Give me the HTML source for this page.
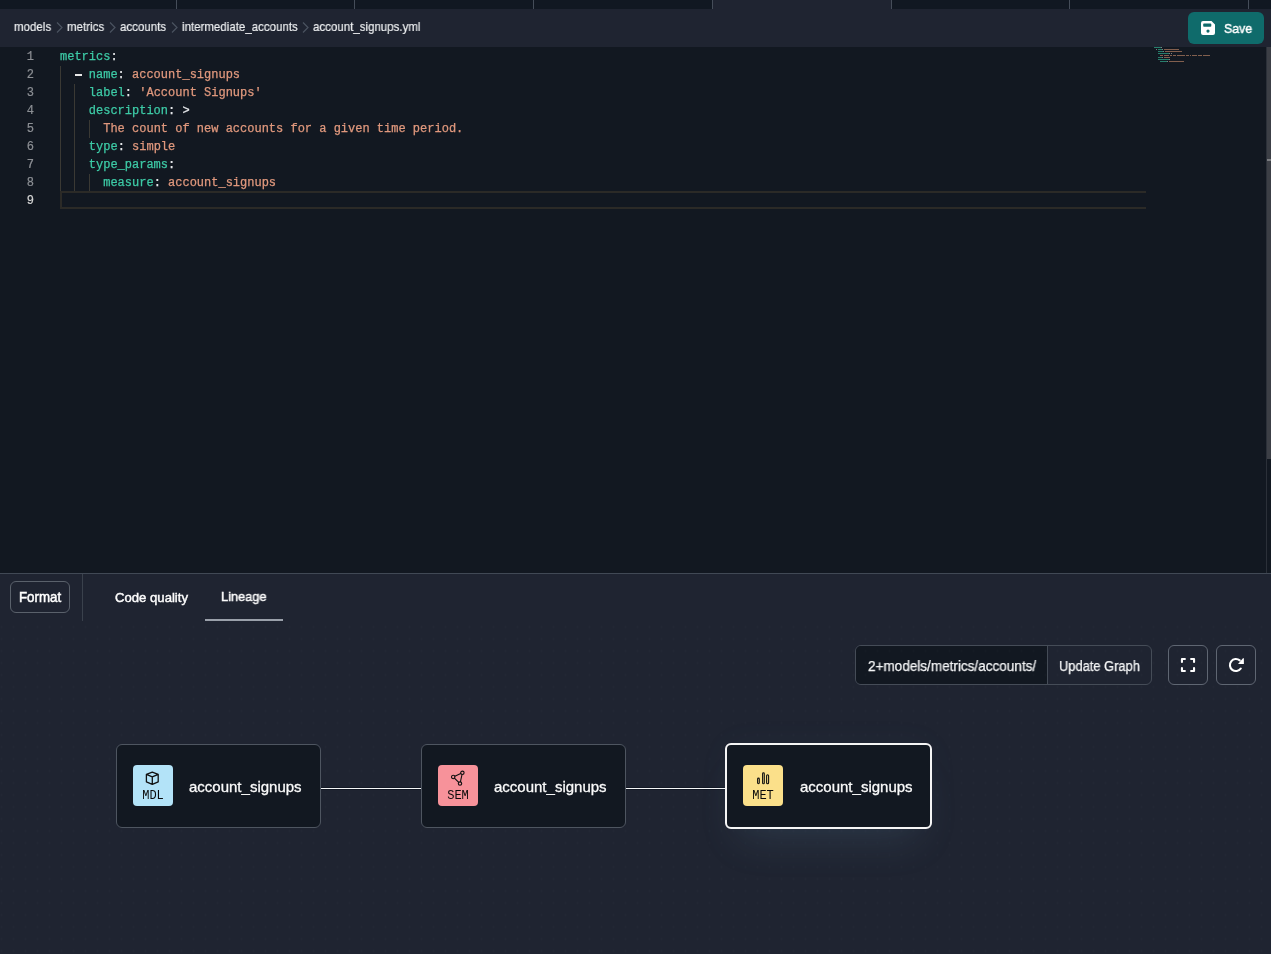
<!DOCTYPE html>
<html><head><meta charset="utf-8">
<style>
*{box-sizing:border-box;margin:0;padding:0}
html,body{width:1271px;height:954px;overflow:hidden;background:#121821;font-family:"Liberation Sans",sans-serif}
.abs,.t,.tab,.gtxt,.ntxt,.code,.ln,.bt,#fmt,.lbl{will-change:transform}
.abs{position:absolute}
#tabs{left:0;top:0;width:1271px;height:9px;background:#111822}
#tabs .sep{position:absolute;top:0;width:1px;height:9px;background:#454d59}
#tabs .act{position:absolute;top:0;left:713px;width:178px;height:9px;background:#1f2431}
#crumb{left:0;top:9px;width:1271px;height:38px;background:#1f2431}
#crumb .t{position:absolute;top:9px;font-size:13px;color:#eceef0;-webkit-text-stroke:0.2px #eceef0;white-space:nowrap;line-height:18px;transform:scaleX(0.885);transform-origin:0 0}
#crumb svg{position:absolute;top:13px}
#save{left:1188px;top:12px;width:76px;height:32px;background:#0f6b6b;border-radius:6px}
#save .lbl{position:absolute;left:36px;top:8px;font-size:13.5px;-webkit-text-stroke:0.45px #fff;color:#fff;line-height:18px;transform:scaleX(0.915);transform-origin:0 0}
#save svg{position:absolute;left:13px;top:9px}
#editor{left:0;top:48px;width:1271px;height:526px;background:#121821}
.ln{position:absolute;left:0;width:34px;text-align:right;font-family:"Liberation Mono",monospace;font-size:12px;color:#8c8f94;line-height:18px;-webkit-text-stroke:0.2px currentColor}
.code{position:absolute;left:60px;font-family:"Liberation Mono",monospace;font-size:12px;line-height:18px;white-space:pre;color:#e6e8eb;-webkit-text-stroke:0.25px currentColor}
.k{color:#3dcaa6}.s{color:#e0987d}
.guide{position:absolute;width:1px;background:#3a3934}
#curline{position:absolute;left:60px;top:143px;width:1086px;height:18px;border:2px solid #2b2a27;border-right:0}
#scroll{left:1266px;top:47px;width:5px;height:526px;border-left:1px solid #2b3039}
#thumb{left:1267px;top:47px;width:4px;height:412px;background:#3c3f46}
#mark{left:1267px;top:159px;width:4px;height:2px;background:#7a7c80}
.mm{position:absolute;height:1.2px;margin-top:-1px;opacity:0.9}
#panel{left:0;top:573px;width:1271px;height:381px;background:#1f2431;border-top:1px solid #414955}
#fmt{position:absolute;left:10px;top:7px;width:60px;height:32px;border:1px solid #5a616b;border-radius:6px}
#fmt span{position:absolute;left:8px;top:6px;color:#fff;-webkit-text-stroke:0.5px #fff;font-size:14px;line-height:18px;transform:scaleX(0.95);transform-origin:0 0;white-space:nowrap}
#vdiv{position:absolute;left:82px;top:0;width:1px;height:47px;background:#3a414c}
.tab{position:absolute;font-size:13px;color:#fcfcfc;-webkit-text-stroke:0.45px #fcfcfc;line-height:18px;white-space:nowrap;transform-origin:0 0}
#uline{position:absolute;left:205px;top:45px;width:78px;height:2px;background:#9aa0aa}
#gbox{position:absolute;left:855px;top:71px;width:297px;height:40px;border:1px solid #454c57;border-radius:6px;overflow:hidden}
#ginput{position:absolute;left:0;top:0;width:192px;height:38px;background:#121821;border-right:1px solid #454c57}
.gtxt{position:absolute;top:11px;font-size:14px;color:#f4f5f6;-webkit-text-stroke:0.25px #f4f5f6;line-height:18px;white-space:nowrap;transform-origin:0 0}
.ibtn{position:absolute;top:71px;width:40px;height:40px;border:1px solid #5f6672;border-radius:6px}
.ibtn svg{position:absolute;left:12px;top:12px}
.node{position:absolute;top:170px;width:205px;height:84px;background:#121821;border:1px solid #4e5560;border-radius:6px}
.node.sel{border:2px solid #f5f5f5;box-shadow:0 24px 40px -14px rgba(120,158,190,0.15),0 0 36px rgba(120,158,190,0.035)}
.badge{position:absolute;left:16px;top:20px;width:40px;height:41px;border-radius:4px}
.badge .bt{position:absolute;left:0;width:40px;top:24px;text-align:center;font-family:"Liberation Mono",monospace;font-size:12px;line-height:14px;color:#0a0a0a;height:14px}
.badge svg{position:absolute;left:13px;top:6px}
.ntxt{position:absolute;left:72px;top:33px;font-size:15px;color:#fafafa;line-height:18px;white-space:nowrap;-webkit-text-stroke:0.3px #fafafa}
.edge{position:absolute;top:214px;height:1px;background:#f5f6f7;box-shadow:0 1px 0 #131925,0 -1px 0 #131925}
</style></head>
<body>
<div id="tabs" class="abs">
  <div class="act"></div>
  <div class="sep" style="left:176px"></div>
  <div class="sep" style="left:354px"></div>
  <div class="sep" style="left:533px"></div>
  <div class="sep" style="left:712px"></div>
  <div class="sep" style="left:891px"></div>
  <div class="sep" style="left:1069px"></div>
  <div class="sep" style="left:1248px"></div>
</div>
<div id="crumb" class="abs">
  <span class="t" style="left:14px">models</span>
  <svg style="left:56px" width="7" height="11" viewBox="0 0 7 11"><path d="M1 0.5 L6 5.5 L1 10.5" fill="none" stroke="#4b5360" stroke-width="1.2"/></svg>
  <span class="t" style="left:67px">metrics</span>
  <svg style="left:109px" width="7" height="11" viewBox="0 0 7 11"><path d="M1 0.5 L6 5.5 L1 10.5" fill="none" stroke="#4b5360" stroke-width="1.2"/></svg>
  <span class="t" style="left:120px">accounts</span>
  <svg style="left:171px" width="7" height="11" viewBox="0 0 7 11"><path d="M1 0.5 L6 5.5 L1 10.5" fill="none" stroke="#4b5360" stroke-width="1.2"/></svg>
  <span class="t" style="left:182px">intermediate_accounts</span>
  <svg style="left:302px" width="7" height="11" viewBox="0 0 7 11"><path d="M1 0.5 L6 5.5 L1 10.5" fill="none" stroke="#4b5360" stroke-width="1.2"/></svg>
  <span class="t" style="left:313px">account_signups.yml</span>
</div>
<div id="save" class="abs">
  <svg width="14" height="14" viewBox="0 0 14 14"><path fill="#fff" fill-rule="evenodd" d="M2 0 H10.5 L14 3.5 V12 A2 2 0 0 1 12 14 H2 A2 2 0 0 1 0 12 V2 A2 2 0 0 1 2 0 Z M3 2.5 A0.8 0.8 0 0 0 2.2 3.3 V5 A0.8 0.8 0 0 0 3 5.8 H9.5 A0.8 0.8 0 0 0 10.3 5 V3.3 A0.8 0.8 0 0 0 9.5 2.5 Z M7 8.5 A1.6 1.6 0 1 0 7 11.7 A1.6 1.6 0 1 0 7 8.5 Z"/></svg>
  <span class="lbl">Save</span>
</div>
<div id="editor" class="abs">
  <div class="ln" style="top:0">1</div>
  <div class="ln" style="top:18px">2</div>
  <div class="ln" style="top:36px">3</div>
  <div class="ln" style="top:54px">4</div>
  <div class="ln" style="top:72px">5</div>
  <div class="ln" style="top:90px">6</div>
  <div class="ln" style="top:108px">7</div>
  <div class="ln" style="top:126px">8</div>
  <div class="ln" style="top:144px;color:#d4d4d4">9</div>
  <div class="guide" style="left:60px;top:18px;height:126px"></div>
  <div class="guide" style="left:74px;top:36px;height:108px"></div>
  <div class="guide" style="left:89px;top:72px;height:18px"></div>
  <div class="guide" style="left:89px;top:126px;height:18px"></div>
  <div id="curline"></div>
  <div class="code" style="top:0"><span class="k">metrics</span>:</div>
  <div class="code" style="top:18px">  <span style="display:inline-block;width:7.2px;position:relative"><span style="position:absolute;left:0.5px;top:-4px;width:7px;height:2px;background:#e8e8e8"></span></span> <span class="k">name</span>: <span class="s">account_signups</span></div>
  <div class="code" style="top:36px">    <span class="k">label</span>: <span class="s">'Account Signups'</span></div>
  <div class="code" style="top:54px">    <span class="k">description</span>: &gt;</div>
  <div class="code" style="top:72px">      <span class="s">The count of new accounts for a given time period.</span></div>
  <div class="code" style="top:90px">    <span class="k">type</span>: <span class="s">simple</span></div>
  <div class="code" style="top:108px">    <span class="k">type_params</span>:</div>
  <div class="code" style="top:126px">      <span class="k">measure</span>: <span class="s">account_signups</span></div>
  <!-- minimap -->
  <div class="mm" style="left:1154px;top:0px;width:7px;background:#2a8a74"></div>
  <div class="mm" style="left:1161px;top:0px;width:1px;background:#8a8a8a"></div>
  <div class="mm" style="left:1156px;top:2px;width:1px;background:#8a8a8a"></div>
  <div class="mm" style="left:1158px;top:2px;width:4px;background:#2a8a74"></div>
  <div class="mm" style="left:1162px;top:2px;width:1px;background:#8a8a8a"></div>
  <div class="mm" style="left:1164px;top:2px;width:15px;background:#8f6753"></div>
  <div class="mm" style="left:1158px;top:4px;width:5px;background:#2a8a74"></div>
  <div class="mm" style="left:1163px;top:4px;width:1px;background:#8a8a8a"></div>
  <div class="mm" style="left:1165px;top:4px;width:17px;background:#8f6753"></div>
  <div class="mm" style="left:1158px;top:6px;width:11px;background:#2a8a74"></div>
  <div class="mm" style="left:1169px;top:6px;width:1px;background:#8a8a8a"></div>
  <div class="mm" style="left:1171px;top:6px;width:1px;background:#8a8a8a"></div>
  <div class="mm" style="left:1160px;top:8px;width:3px;background:#8f6753"></div>
  <div class="mm" style="left:1164px;top:8px;width:5px;background:#8f6753"></div>
  <div class="mm" style="left:1170px;top:8px;width:2px;background:#8f6753"></div>
  <div class="mm" style="left:1173px;top:8px;width:3px;background:#8f6753"></div>
  <div class="mm" style="left:1177px;top:8px;width:8px;background:#8f6753"></div>
  <div class="mm" style="left:1186px;top:8px;width:3px;background:#8f6753"></div>
  <div class="mm" style="left:1190px;top:8px;width:1px;background:#8f6753"></div>
  <div class="mm" style="left:1192px;top:8px;width:5px;background:#8f6753"></div>
  <div class="mm" style="left:1198px;top:8px;width:4px;background:#8f6753"></div>
  <div class="mm" style="left:1203px;top:8px;width:7px;background:#8f6753"></div>
  <div class="mm" style="left:1158px;top:10px;width:4px;background:#2a8a74"></div>
  <div class="mm" style="left:1162px;top:10px;width:1px;background:#8a8a8a"></div>
  <div class="mm" style="left:1164px;top:10px;width:6px;background:#8f6753"></div>
  <div class="mm" style="left:1158px;top:12px;width:11px;background:#2a8a74"></div>
  <div class="mm" style="left:1169px;top:12px;width:1px;background:#8a8a8a"></div>
  <div class="mm" style="left:1160px;top:14px;width:7px;background:#2a8a74"></div>
  <div class="mm" style="left:1167px;top:14px;width:1px;background:#8a8a8a"></div>
  <div class="mm" style="left:1169px;top:14px;width:15px;background:#8f6753"></div>
</div>
<div id="scroll" class="abs"></div><div id="thumb" class="abs"></div><div id="mark" class="abs"></div>
<div id="panel" class="abs">
  <div id="fmt"><span>Format</span></div>
  <div id="vdiv"></div>
  <div class="tab" style="left:115px;top:15px;transform:scaleX(1.01)">Code quality</div>
  <div class="tab" style="left:221px;top:14px;transform:scaleX(0.985)">Lineage</div>
  <div id="uline"></div>
  <div id="gbox">
    <div id="ginput"><span class="gtxt" style="left:12px;transform:scaleX(0.967)">2+models/metrics/accounts/</span></div>
    <span class="gtxt" style="left:203px;transform:scaleX(0.92)">Update Graph</span>
  </div>
  <div class="ibtn" style="left:1168px">
    <svg width="16" height="16" viewBox="0 0 16 16" style="left:11px;top:11px"><path d="M1.95 4.9 V1.95 H4.9 M11.1 1.95 H14.05 V4.9 M14.05 11.1 V14.05 H11.1 M4.9 14.05 H1.95 V11.1" fill="none" stroke="#fff" stroke-width="2.1" stroke-linejoin="round" stroke-linecap="round"/></svg>
  </div>
  <div class="ibtn" style="left:1216px">
    <svg width="18" height="18" viewBox="0 0 18 18" style="left:11px;top:11px"><path d="M11.76 3.4 A6 6 0 1 0 12.8 11.5" fill="none" stroke="#fff" stroke-width="2.1" stroke-linecap="round"/><path d="M10 7.05 L15.85 7.05 L15.85 1.6 L15.2 1.1 Z" fill="#fff"/></svg>
  </div>
  <div style="position:absolute;left:0;top:48px;width:1271px;height:333px;background-image:radial-gradient(circle at 1.5px 1.5px, rgba(255,255,255,0.015) 1.1px, rgba(255,255,255,0) 1.4px);background-size:12px 12px;background-position:0px 3.5px"></div>
  <!-- nodes -->

  <div class="edge" style="left:321px;width:100px"></div>
  <div class="edge" style="left:626px;width:100px"></div>
  <div class="node" style="left:116px">
    <div class="badge" style="background:#b3e3f8">
      <svg width="15" height="15" viewBox="0 0 15 15" style="left:12px;top:6px"><path d="M7.3 1.1 L13.2 3.4 V10.9 L7.3 13.4 L1.4 10.9 V3.4 Z M1.4 3.4 L7.3 5.9 L13.2 3.4 M7.3 5.9 V13.4" fill="none" stroke="#111" stroke-width="1.3" stroke-linejoin="round"/></svg>
      <div class="bt">MDL</div>
    </div>
    <div class="ntxt">account_signups</div>
  </div>
  <div class="node" style="left:421px">
    <div class="badge" style="background:#f7929a">
      <svg width="16" height="16" viewBox="0 0 16 16" style="left:13px;top:5px"><path d="M2.2 7 L11.4 2.8 L9 13.6 Z" fill="none" stroke="#111" stroke-width="1.1"/><circle cx="2.2" cy="7" r="1.7" fill="#f7929a" stroke="#111" stroke-width="1.1"/><circle cx="11.4" cy="2.8" r="1.7" fill="#f7929a" stroke="#111" stroke-width="1.1"/><circle cx="9" cy="13.6" r="1.7" fill="#f7929a" stroke="#111" stroke-width="1.1"/></svg>
      <div class="bt">SEM</div>
    </div>
    <div class="ntxt">account_signups</div>
  </div>
  <div class="node sel" style="left:725px;top:169px;width:207px;height:86px">
    <div class="badge" style="background:#fbe08a;left:16px;top:20px;height:41px">
      <svg width="15" height="15" viewBox="0 0 15 15"><rect x="1.6" y="7.1" width="1.7" height="5.6" rx="0.85" fill="none" stroke="#111" stroke-width="1.1"/><rect x="6.6" y="1.8" width="1.7" height="11" rx="0.85" fill="none" stroke="#111" stroke-width="1.1"/><rect x="10.6" y="3.7" width="2" height="9.1" rx="1" fill="none" stroke="#111" stroke-width="1.1"/></svg>
      <div class="bt">MET</div>
    </div>
    <div class="ntxt" style="left:73px;top:33px">account_signups</div>
  </div>
</div>
</body></html>
